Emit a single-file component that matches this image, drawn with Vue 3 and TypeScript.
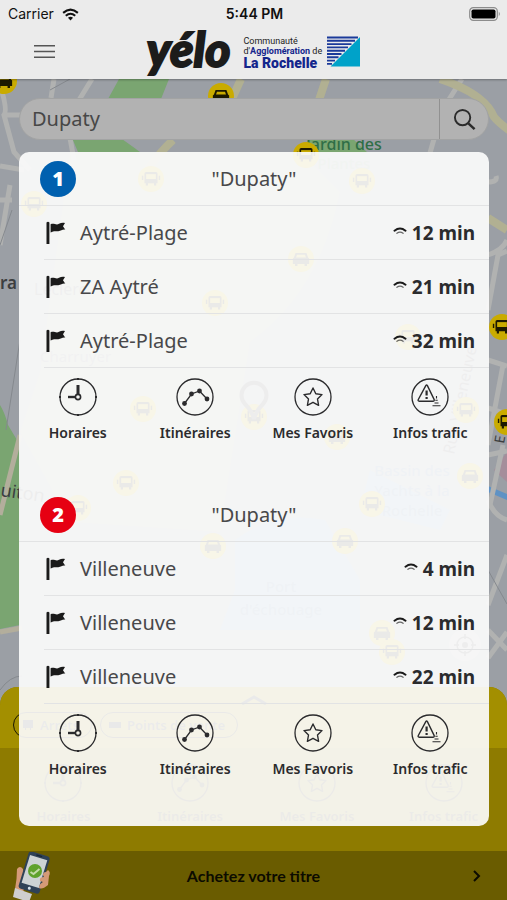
<script setup lang="ts">
interface Departure {
  destination: string
  minutes: number
}

interface Line {
  id: string
  tone: 'blue' | 'red'
  stop: string
  departures: Departure[]
}

interface Action {
  icon: 'clock' | 'route' | 'star' | 'traffic'
  label: string
}

interface Marker {
  x: number
  y: number
  kind: 'bus' | 'car'
}

const lines: Line[] = [
  {
    id: '1',
    tone: 'blue',
    stop: 'Dupaty',
    departures: [
      { destination: 'Aytré-Plage', minutes: 12 },
      { destination: 'ZA Aytré', minutes: 21 },
      { destination: 'Aytré-Plage', minutes: 32 },
    ],
  },
  {
    id: '2',
    tone: 'red',
    stop: 'Dupaty',
    departures: [
      { destination: 'Villeneuve', minutes: 4 },
      { destination: 'Villeneuve', minutes: 12 },
      { destination: 'Villeneuve', minutes: 22 },
    ],
  },
]

const actions: Action[] = [
  { icon: 'clock', label: 'Horaires' },
  { icon: 'route', label: 'Itinéraires' },
  { icon: 'star', label: 'Mes Favoris' },
  { icon: 'traffic', label: 'Infos trafic' },
]

const markers: Marker[] = [
  { x: 4, y: 81, kind: 'car' },
  { x: 221, y: 96, kind: 'car' },
  { x: 306, y: 155, kind: 'bus' },
  { x: 151, y: 179, kind: 'bus' },
  { x: 362, y: 181, kind: 'bus' },
  { x: 34, y: 204, kind: 'bus' },
  { x: 301, y: 259, kind: 'car' },
  { x: 215, y: 303, kind: 'bus' },
  { x: 408, y: 337, kind: 'bus' },
  { x: 502, y: 327, kind: 'bus' },
  { x: 143, y: 409, kind: 'bus' },
  { x: 254, y: 417, kind: 'bus' },
  { x: 466, y: 410, kind: 'bus' },
  { x: 507, y: 422, kind: 'bus' },
  { x: 337, y: 437, kind: 'car' },
  { x: 470, y: 476, kind: 'car' },
  { x: 126, y: 483, kind: 'bus' },
  { x: 372, y: 504, kind: 'bus' },
  { x: 78, y: 508, kind: 'bus' },
  { x: 213, y: 546, kind: 'car' },
  { x: 345, y: 541, kind: 'car' },
  { x: 382, y: 633, kind: 'car' },
  { x: 392, y: 652, kind: 'bus' },
]
</script>

<template>
  <!-- Shared icon shapes, referenced with <use> -->
  <svg class="sprite" aria-hidden="true">
    <symbol id="i-clock" viewBox="0 0 40 40">
      <g fill="none" stroke="currentColor">
        <circle cx="20" cy="20" r="18" stroke-width="1.3" />
        <path d="M20 1v2M20 37v2M1 20h2M37 20h2" stroke-width="2" />
        <path d="M20 17V8" stroke-width="3" />
        <path d="M17 20h-7" stroke-width="2.4" />
        <circle cx="20" cy="20" r="2.6" stroke-width="1.6" />
      </g>
    </symbol>
    <symbol id="i-route" viewBox="0 0 40 40">
      <circle cx="20" cy="20" r="18" fill="none" stroke="currentColor" stroke-width="1.3" />
      <path d="M9.500 26.500 16.500 17l8-3 7.500 8" fill="none" stroke="currentColor" stroke-width="1.3" />
      <g fill="currentColor">
        <circle cx="9.500" cy="26.500" r="2.400" />
        <circle cx="16.500" cy="17" r="2.400" />
        <circle cx="24.500" cy="14" r="2.400" />
        <circle cx="32" cy="22" r="2.400" />
      </g>
    </symbol>
    <symbol id="i-star" viewBox="0 0 40 40">
      <g fill="none" stroke="currentColor" stroke-width="1.400" stroke-linejoin="round">
        <circle cx="20" cy="20" r="18" stroke-width="1.3" />
        <path d="m20 11 2.800 5.700 6.200.9-4.500 4.400 1.100 6.300L20 25.300l-5.600 3 1.100-6.300-4.500-4.400 6.200-.9z" />
      </g>
    </symbol>
    <symbol id="i-traffic" viewBox="0 0 40 40">
      <g fill="none" stroke="currentColor" stroke-linejoin="round">
        <circle cx="20" cy="20" r="18" stroke-width="1.3" />
        <path d="M15.800 8.600q.8-1.300 1.600 0l6.800 14q.3 1.600-1.300 1.700H9.300q-1.700-.2-1-1.800z" stroke-width="1.400" />
        <path d="M16.600 13.500v5M16.600 20v2" stroke-width="2.200" />
        <path d="M26.500 19v2.500M25.300 23.200h2.400M24.500 26h4M22.500 28.800h8" stroke-width="1.100" />
      </g>
    </symbol>
    <symbol id="i-flag" viewBox="0 0 20 24">
      <path d="M.5 1.500Q2 0 3.400 1.500V23H.5z" fill="currentColor" />
      <path d="M4.600 3.200C8 1.500 10 4.600 13 2.800c2-1.300 4-1.300 6-.9l-2 3.400 2.300 3.400c-3-.6-4 1.400-7 1.500-3 .2-4.600-.6-7.700 1.300z" fill="currentColor" />
    </symbol>
    <symbol id="i-live" viewBox="0 0 14 8">
      <g fill="none" stroke="currentColor" stroke-linecap="round">
        <path d="M1.500 3.700Q7-.7 12.500 3.700" stroke-width="2" />
        <path d="M3.900 6.300Q7 3.900 10.100 6.300" stroke-width="1.200" opacity=".65" />
      </g>
    </symbol>
    <symbol id="m-bus" viewBox="0 0 24 24">
      <circle cx="12" cy="12" r="12" fill="#c9ab00" />
      <path d="M7.500 5.500h9q1.500 0 1.500 1.500v9h-1.200v2h-2v-2H9.200v2h-2v-2H6V7q0-1.500 1.500-1.500z" fill="#1c1900" />
      <path d="M7.500 7.500h9v4.500h-9z" fill="#c9ab00" />
      <path d="M4.200 9v4M19.800 9v4" stroke="#1c1900" stroke-width="1.300" />
    </symbol>
    <symbol id="m-car" viewBox="0 0 24 24">
      <circle cx="12" cy="12" r="12" fill="#c9ab00" />
      <path d="M7 6.500h10l1.500 4 1 1v5h-2v2h-2.200v-2H8.700v2H6.500v-2h-2v-5l1-1z" fill="#1c1900" />
      <path d="M8.300 8h7.400l.9 2.600H7.400z" fill="#c9ab00" />
    </symbol>
  </svg>

  <div class="screen">
    <header class="top">
      <div class="status">
        <span class="carrier">
          Carrier
          <svg class="wifi" viewBox="0 0 18 13" aria-hidden="true">
            <g fill="none" stroke="#111" stroke-width="2.200">
              <path d="M1.200 4.800Q9-2 16.800 4.800" />
              <path d="M4 7.900q5-4.300 10 0" />
            </g>
            <path d="M6.300 10q2.700-2.200 5.400 0L9 12.800z" fill="#111" />
          </svg>
        </span>
        <time class="clock">5:44 PM</time>
        <svg class="battery" viewBox="0 0 32 14" aria-label="Batterie">
          <rect x=".7" y=".7" width="27.600" height="12.600" rx="3.600" fill="none" stroke="#8c8c8c" stroke-width="1.200" />
          <rect x="2.500" y="2.500" width="24" height="9" rx="1.800" fill="#000" />
          <path d="M29.800 4.800q2 2.200 0 4.400z" fill="#8c8c8c" />
        </svg>
      </div>
      <nav class="nav">
        <button class="menu" type="button" aria-label="Menu">
          <svg viewBox="0 0 20 14" aria-hidden="true">
            <path d="M0 1.500h20M0 7h20M0 12.500h20" stroke="#555" stroke-width="1.600" />
          </svg>
        </button>
        <a class="brand" href="#">
          <span class="wordmark">yélo</span>
          <span class="agglo">
            <span>Communauté</span>
            <span>d'<b>Agglomération</b> de</span>
            <strong>La Rochelle</strong>
          </span>
          <svg class="emblem" viewBox="0 0 33 31" aria-hidden="true">
            <path d="M0 1.500h31M0 4.800h28M0 8.100h24.500M0 11.400h21M0 14.700h18M0 18h14.500M0 21.300h11.500M0 24.600h8M0 27.900h5" stroke="#1b3a9a" stroke-width="1.900" />
            <path d="M33 1v29.500H3.500z" fill="#00a2c9" />
          </svg>
        </a>
      </nav>
    </header>

    <main class="stage">
      <div class="backdrop" aria-hidden="true">
        <svg class="map" viewBox="0 79 507 772" preserveAspectRatio="xMidYMin slice">
          <rect y="79" width="507" height="772" fill="#9b9fa5" />
          <path d="M70 152h230l40 40q-20 100-90 150l-30 190-150-10-50-90 20-60z" fill="#a3ad9a" />
          <path d="M119 79h50l-8 20h-53zM72 138l40-6q20 14 28 20H78zM308 139h45l15 14h-64z" fill="#7aa571" />
          <path d="M0 405q5 8 8 20l12 20v180l-20 4z" fill="#7aa571" />
          <path d="M235 540q40-30 90-20l35 60v50H220l15-40zM370 470l80 40-10 20-80-20z" fill="#7fa6cc" />
          <path d="M494 470l13-18v30z" fill="#a58e9b" />
          <path d="M488 486l19 8v6l-19-8z" fill="#5f92c4" />
          <g fill="none" stroke="#b1b2b1" stroke-width="5">
            <path d="M0 85q8 25 4 30L14 152 30 170M4 115h18M54 79 51 98M92 79 79 100M70 138l4 22M0 166l24 4M12 200H0M10 185 0 245M462 79l-14 22M434 139l-4 14M488 182q10 0 8-6M488 255q15-5 19-15M488 310l10-55 9-4M488 360l19 6M503 365l-15 80M488 408l19 6M488 455l19-4M503 445l-13 60M488 500q6 16 19 20M507 555 488 605M488 630l19 20M507 632l-19 26" />
            <path d="M0 515 20 435M0 632l22-4" stroke="#b3ae9c" />
          </g>
          <path d="M241 79l-10 22M326 79l-8 24M147 170q15-20 26-30M440 79q45 15 54 38 5 6 16 14M488 218l19 12" fill="none" stroke="#b1b092" stroke-width="8" />
          <g fill="none" stroke="#85898e" stroke-width="1">
            <path d="M12 210 0 245M20 340 6 430M0 690q10-14 22-14M488 570l19 34M50 90l20-11" />
          </g>
          <g font-family="Noto Sans, sans-serif" fill="#3c3e40">
            <text x="0" y="289" font-weight="600" font-size="17">ra</text>
            <text x="34" y="295" fill="#5a5c5e" font-size="16">Leclerc</text>
            <text x="0" y="496" font-size="18" transform="rotate(8 0 496)">uiton</text>
            <text x="40" y="362" font-size="15" fill="#77797b">Charruyer</text>
            <text x="504" y="444" transform="rotate(-80 504 444)" font-size="14">E</text>
            <text x="454" y="455" transform="rotate(-78 454 455)" font-size="16" fill="#4c4e50">Rue Villeneuve</text>
          </g>
          <g font-family="Noto Sans, sans-serif" font-size="15" font-weight="500" text-anchor="middle">
            <text x="344" y="150" font-size="16" fill="#2f6e46">Jardin des</text>
            <text x="344" y="169" fill="#6f9a76">Plantes</text>
            <g fill="#5a7fa6">
              <text x="412" y="476">Bassin des</text>
              <text x="412" y="496">Yachts à la</text>
              <text x="412" y="516">Rochelle</text>
              <text x="281" y="592">Port</text>
              <text x="281" y="615">d'échouage</text>
            </g>
          </g>
          <use v-for="(m, i) in markers" :key="i" :href="'#m-' + m.kind" :x="m.x - 13" :y="m.y - 13" width="26" height="26" />
          <path d="M254 419q-2-8-9-15a12.500 12.500 0 1 1 18 0q-7 7-9 15z" fill="none" stroke="#444" stroke-width="4" />
          <circle cx="465" cy="645" r="16" fill="#b2b2b2" />
          <g fill="none" stroke="#444" stroke-width="1.500">
            <circle cx="465" cy="645" r="8" />
            <path d="M465 634v5M465 651v5M454 645h5M471 645h5" />
          </g>
          <circle cx="465" cy="645" r="3" fill="#444" />
        </svg>

        <div class="sheet">
          <div class="sheet-head">
            <svg class="chevron" viewBox="0 0 26 10"><path d="M1 9 13 2l12 7" fill="none" stroke="#222" stroke-width="3" /></svg>
            <div class="pills">
              <span class="pill"><svg viewBox="0 0 12 12"><path d="M1 1h10v8H9v2H8V9H4v2H3V9H1z" fill="#111" /></svg>Arrêts</span>
              <span class="pill"><svg viewBox="0 0 12 12"><path d="M0 3h12v6H0z" fill="#111" /></svg>Points de vente</span>
            </div>
          </div>
          <div class="sheet-body">
            <span v-for="a in actions" :key="a.label" class="hint">
              <svg viewBox="0 0 40 40"><use :href="'#i-' + a.icon" /></svg>
              {{ a.label }}
            </span>
          </div>
        </div>
      </div>

      <div class="content">
        <form class="search" role="search" @submit.prevent>
          <input type="text" value="Dupaty" aria-label="Rechercher un arrêt" />
          <button type="submit" aria-label="Rechercher">
            <svg viewBox="0 0 24 24" aria-hidden="true">
              <circle cx="10" cy="10" r="8" fill="none" stroke="#2b2b2b" stroke-width="2" />
              <path d="m16 16 6.500 6" stroke="#2b2b2b" stroke-width="2.600" />
            </svg>
          </button>
        </form>

        <div class="card">
          <section v-for="line in lines" :key="line.id" class="line">
            <header class="line-head">
              <span class="badge" :class="line.tone">{{ line.id }}</span>
              <h2>"{{ line.stop }}"</h2>
            </header>
            <ul class="departures">
              <li v-for="(d, i) in line.departures" :key="i">
                <svg class="flag" aria-hidden="true"><use href="#i-flag" /></svg>
                <span class="destination">{{ d.destination }}</span>
                <svg class="live" aria-hidden="true"><use href="#i-live" /></svg>
                <strong>{{ d.minutes }} min</strong>
              </li>
            </ul>
            <div class="actions">
              <button v-for="a in actions" :key="a.label" type="button">
                <svg aria-hidden="true"><use :href="'#i-' + a.icon" /></svg>
                {{ a.label }}
              </button>
            </div>
          </section>
        </div>
      </div>
    </main>

    <a class="buy" href="#">
      <svg class="phone" viewBox="0 0 40 48" aria-hidden="true">
        <path d="M4 17q3-4 6 0l3 14-3 9-8-3q2-10 2-20z" fill="#d59a78" />
        <path d="M2 36l17 6-3 8-16-5z" fill="#cfcfcf" />
        <g transform="rotate(17 21 21)">
          <rect x="10" y="1" width="22" height="39" rx="3" fill="#2f4257" />
          <rect x="12" y="5" width="18" height="29" fill="#cdd3d4" />
          <circle cx="21" cy="37" r="1.500" fill="#d5e3ec" />
          <path d="M18 3h6" stroke="#182536" stroke-width="1.200" />
        </g>
        <circle cx="22" cy="19" r="7" fill="#5fa22c" />
        <path d="m17.500 20 3 2 6-5" fill="none" stroke="#c3dba8" stroke-width="2" />
        <path d="M35 18q3 2 1 6l-1 9q-6 5-9 3 0-4 4-6l-3-1q-1-4 4-4l-1-2q0-3 3-3z" fill="#d59a78" />
      </svg>
      <span>Achetez votre titre</span>
      <svg class="arrow" viewBox="0 0 8 12" aria-hidden="true"><path d="m1 1 5 5-5 5" fill="none" stroke="#0c0b00" stroke-width="2" /></svg>
    </a>
  </div>
</template>

<style>
body {
  margin: 0;
  background: #9b9fa5;
}
</style>

<style scoped>
.sprite {
  position: absolute;
  width: 0;
  height: 0;
}

.screen {
  display: flex;
  flex-direction: column;
  min-height: 100vh;
  font-family: "Noto Sans", "Open Sans", sans-serif;
  color: #2b2b2d;
}

button {
  padding: 0;
  border: 0;
  background: none;
  font: inherit;
  color: inherit;
  cursor: pointer;
}

a {
  color: inherit;
  text-decoration: none;
}

.top {
  z-index: 1;
  background: #ebebeb;
  box-shadow: 0 1px 2px rgba(0, 0, 0, 0.3);
}

.status {
  display: grid;
  grid-template-columns: 1fr auto 1fr;
  align-items: center;
  height: 28px;
  padding: 0 6px 0 8px;
  font: 14px/28px Inter, Roboto, sans-serif;
  color: #111;
}

.carrier {
  display: flex;
  align-items: center;
  gap: 8px;
}

.wifi {
  width: 17px;
  height: 13px;
}

.clock {
  font-weight: 600;
}

.battery {
  justify-self: end;
  width: 32px;
  height: 14px;
}

.nav {
  display: grid;
  grid-template-columns: 1fr auto 1fr;
  align-items: center;
  height: 51px;
  padding: 0 34px;
}

.menu {
  display: flex;
  justify-self: start;
  margin-bottom: 4px;
}

.menu svg {
  width: 21px;
  height: 15px;
}

.brand {
  display: flex;
  align-items: center;
  height: 46px;
  margin-bottom: 4px;
}

.wordmark {
  margin-right: 13px;
  padding-bottom: 6px;
  font: italic 900 48px/40px Lato, sans-serif;
  color: #1c1c1b;
  -webkit-text-stroke: 2px #1c1c1b;
  paint-order: stroke;
  stroke-linejoin: round;
}

.agglo {
  display: flex;
  flex-direction: column;
  margin-right: 5px;
  padding-top: 2px;
  font: 9px/10px Roboto, sans-serif;
  color: #222;
  white-space: nowrap;
}

.agglo b {
  color: #14268c;
}

.agglo strong {
  font: 900 14px/14px Roboto, sans-serif;
  color: #14268c;
}

.emblem {
  width: 33px;
  height: 31px;
}

.stage {
  flex: 1;
  display: grid;
}

.backdrop,
.content {
  grid-area: 1 / 1;
  min-width: 0;
}

.backdrop {
  position: relative;
  display: flex;
  flex-direction: column;
  justify-content: flex-end;
  overflow: hidden;
}

.map {
  position: absolute;
  inset: 0;
  width: 100%;
  height: 100%;
}

.sheet {
  position: relative;
  overflow: hidden;
  border-radius: 18px 18px 0 0;
  background: #8e7b00;
}

.sheet-head {
  display: flex;
  flex-direction: column;
  align-items: center;
  gap: 7px;
  height: 53px;
  padding-top: 8px;
  background: #a38f00;
}

.chevron {
  width: 26px;
  height: 10px;
}

.pills {
  display: flex;
  align-self: stretch;
  gap: 8px;
  padding-left: 13px;
}

.pill {
  display: flex;
  align-items: center;
  gap: 6px;
  height: 24px;
  padding: 0 12px 0 8px;
  border: 1px solid #1a1700;
  border-radius: 13px;
  font-size: 13px;
  font-weight: 600;
}

.pill svg {
  width: 12px;
  height: 12px;
}

.sheet-body {
  display: grid;
  grid-template-columns: repeat(4, 1fr);
  height: 103px;
}

.hint {
  display: flex;
  flex-direction: column;
  align-items: center;
  gap: 4px;
  padding-top: 15px;
  font-size: 13px;
  font-weight: 600;
  line-height: 18px;
  color: #2c2600;
}

.hint svg {
  width: 40px;
  height: 40px;
}

.content {
  position: relative;
  padding: 19px 18px 24px 19px;
}

.search {
  display: flex;
  height: 40px;
  margin-bottom: 12px;
  border: 1px solid #a2a3a3;
  border-radius: 21px;
  background: #b2b2b2;
  overflow: hidden;
}

.search input {
  flex: 1;
  min-width: 0;
  padding: 0 12px;
  border: 0;
  outline: 0;
  background: none;
  font: 20px/40px "Noto Sans", sans-serif;
  color: #474747;
}

.search button {
  display: flex;
  align-items: center;
  justify-content: center;
  width: 49px;
  border-left: 1px solid #919191;
}

.search svg {
  width: 23px;
  height: 23px;
}

.card {
  padding-bottom: 2px;
  border-radius: 10px;
  background: rgba(252, 252, 252, 0.92);
}

.line {
  padding-bottom: 45px;
}

.line-head {
  display: grid;
  grid-template-columns: 36px 1fr 36px;
  align-items: center;
  height: 53px;
  padding: 0 21px;
  border-bottom: 1px solid #e2e3e4;
}

.badge {
  height: 36px;
  border-radius: 50%;
  font: 900 20px/36px "Noto Sans", sans-serif;
  text-align: center;
  color: #fff;
}

.badge.blue {
  background: #0060af;
}

.badge.red {
  background: #e60012;
}

h2 {
  margin: 0;
  font-size: 20px;
  font-weight: 400;
  line-height: 28px;
  text-align: center;
  color: #48484a;
}

.departures {
  margin: 0;
  padding: 0 0 0 25px;
  list-style: none;
}

.departures li {
  display: flex;
  align-items: center;
  height: 53px;
  padding: 0 14px 0 2px;
  border-bottom: 1px solid #e2e3e4;
  font-size: 20px;
  line-height: 28px;
}

.departures strong {
  font-size: 19px;
}

.flag {
  width: 20px;
  height: 24px;
  margin-right: 14px;
  color: #1a1a1a;
}

.destination {
  flex: 1;
  color: #48484a;
}

.live {
  width: 14px;
  height: 8px;
  margin: 0 5px 4px 0;
  color: #1a1a1a;
}

.actions {
  display: grid;
  grid-template-columns: repeat(4, 1fr);
}

.actions button {
  display: flex;
  flex-direction: column;
  align-items: center;
  gap: 6px;
  padding-top: 9px;
  font-size: 14px;
  font-weight: 600;
  line-height: 20px;
  white-space: nowrap;
}

.actions svg {
  width: 40px;
  height: 40px;
}

.buy {
  display: grid;
  grid-template-columns: 60px 1fr 60px;
  align-items: center;
  height: 49px;
  background: #6a5c00;
  font: 700 16px/20px Lato, sans-serif;
  text-align: center;
  color: #0c0b00;
}

.phone {
  width: 40px;
  height: 48px;
  margin-left: 13px;
}

.arrow {
  justify-self: end;
  width: 8px;
  height: 12px;
  margin-right: 26px;
}
</style>
